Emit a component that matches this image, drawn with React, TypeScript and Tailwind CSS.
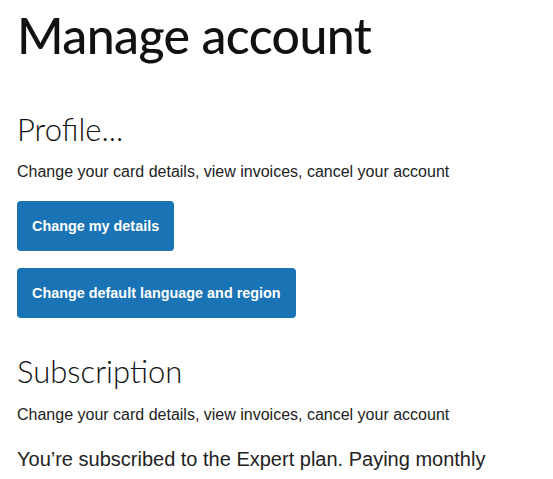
export default function App() {
  const heading = "font-['Lato','Open_Sans',sans-serif]"
  const body = "font-['Liberation_Sans',Arial,sans-serif]"
  const button = `${body} h-[50px] rounded-[4px] bg-[#1a73b5] px-[15px] pt-[2px] text-[14.4px] font-bold text-white`

  return (
    <div className="min-h-screen bg-white px-[17px] text-[#111]">
      <h1 className={`${heading} pt-[5px] text-[50px] font-medium leading-[60px] tracking-[-0.6px] text-[#111]`}>Manage account</h1>

      <section className="mt-[44px]">
        <h2 className={`${heading} text-[31px] font-light leading-[40px]`}>Profile...</h2>
        <p className={`${body} mt-[13px] text-[16px] leading-[20px] text-[#222]`}>
          Change your card details, view invoices, cancel your account
        </p>
        <div className="mt-[19px] flex flex-col items-start gap-[17px]">
          <button className={button}>Change my details</button>
          <button className={button}>Change default language and region</button>
        </div>
      </section>

      <section className="mt-[33px]">
        <h2 className={`${heading} text-[31px] font-light leading-[40px]`}>Subscription</h2>
        <p className={`${body} mt-[14px] text-[16px] leading-[20px] text-[#222]`}>
          Change your card details, view invoices, cancel your account
        </p>
        <p className={`${body} mt-[21px] text-[20px] leading-[26px] text-[#222]`}>
          You’re subscribed to the Expert plan. Paying monthly
        </p>
      </section>
    </div>
  )
}
